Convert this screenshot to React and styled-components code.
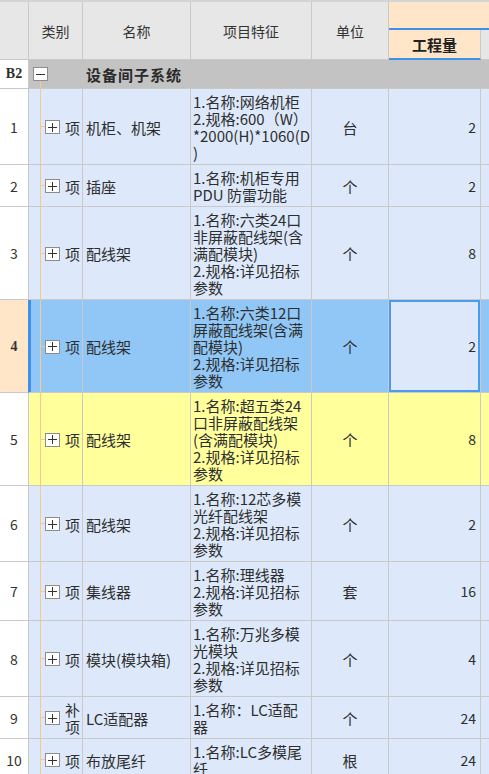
import React from "react";
import styled, { createGlobalStyle, css } from "styled-components";

const colors = {
  line: "#c9c9c9",
  header: "#e7e7e7",
  group: "#c3c3c3",
  row: "#dde9fb",
  selected: "#90c7f6",
  marked: "#ffff9c",
  peach: "#ffe6c8",
  blue: "#3f90ea",
  tree: "#f7c98f",
  text: "#2e2e2e",
};

const COLS = "29px 54px 108px 121px 77px 92px 1fr";

const GlobalStyle = createGlobalStyle`
  html, body {
    margin: 0;
    padding: 0;
    background: #ffffff;
  }
  body {
    font-family: "Noto Sans CJK SC", "Liberation Sans", sans-serif;
    color: ${colors.text};
  }
`;

const Sheet = styled.div`
  width: 489px;
  height: 774px;
  overflow: hidden;
`;

const Header = styled.div`
  display: grid;
  grid-template-columns: ${COLS};
  grid-template-rows: 28px 30px;
  border-top: 2px solid #d4d4d4;
  background: ${colors.header};
`;

const HeadCell = styled.div`
  grid-row: span 2;
  display: flex;
  align-items: center;
  justify-content: center;
  border-right: 1px solid ${colors.line};
  border-bottom: 1px solid ${colors.line};
  font-size: 14px;
  color: #333;
`;

const QtyBand = styled.div`
  grid-column: 6 / span 2;
  grid-row: 1;
  background: ${colors.peach};
  border-bottom: 2px solid ${colors.blue};
`;

const QtyHead = styled.div`
  grid-column: 6;
  grid-row: 2;
  display: flex;
  align-items: center;
  justify-content: center;
  background: ${colors.peach};
  border-right: 1px solid ${colors.line};
  border-bottom: 2px solid ${colors.blue};
  font-size: 15px;
  font-weight: 700;
  color: #222;
`;

const HeadFiller = styled.div`
  grid-column: 7;
  grid-row: 2;
  border-bottom: 1px solid ${colors.line};
`;

const GroupRow = styled.div`
  display: grid;
  grid-template-columns: 29px 1fr;
  height: 29px;
`;

const GroupIndex = styled.div`
  display: flex;
  align-items: center;
  justify-content: center;
  background: #fff;
  border-right: 1px solid ${colors.line};
  border-bottom: 1px solid ${colors.line};
  font-family: "Liberation Serif", "Noto Sans CJK SC", serif;
  font-size: 14px;
  font-weight: 700;
`;

const GroupBody = styled.div`
  display: flex;
  align-items: center;
  background: ${colors.group};
  border-bottom: 1px solid ${colors.line};
`;

const GroupTree = styled.div`
  width: 54px;
  height: 100%;
  display: flex;
  align-items: center;
  padding-left: 4px;
  box-sizing: border-box;
  background: linear-gradient(${colors.tree}, ${colors.tree}) no-repeat 11px
    100% / 1px 7px;
`;

const GroupTitle = styled.div`
  padding-left: 3px;
  font-size: 15px;
  font-weight: 700;
  letter-spacing: 1px;
  color: #2a2a2a;
`;

const Toggle = styled.span`
  flex: none;
  width: 15px;
  height: 14px;
  box-sizing: border-box;
  border: 1px solid #8c8c8c;
  background: linear-gradient(#333, #333) center / 9px 1px no-repeat,
    ${(p) =>
      p.$open
        ? ""
        : css`linear-gradient(#333, #333) center / 1px 9px no-repeat,`}
    #fff;
`;

const rowBg = (state) =>
  state === "selected"
    ? colors.selected
    : state === "marked"
    ? colors.marked
    : colors.row;

const Row = styled.div`
  display: grid;
  grid-template-columns: ${COLS};
  background: ${(p) => rowBg(p.$state)};
  font-size: 15px;
  line-height: 17px;
`;

const Cell = styled.div`
  border-right: 1px solid ${colors.line};
  border-bottom: 1px solid ${colors.line};
  padding: 4px 2px 3px;
  display: flex;
  align-items: center;
  overflow: hidden;
`;

const IndexCell = styled(Cell)`
  justify-content: center;
  font-size: 14px;
  color: #333;
  background: ${(p) => (p.$selected ? colors.peach : "#fff")};
  ${(p) =>
    p.$selected &&
    css`
      border-right-color: ${colors.blue};
      font-weight: 700;
      font-family: "Liberation Serif", "Noto Sans CJK SC", serif;
    `}
`;

const KindCell = styled(Cell)`
  padding-left: 16px;
  background: linear-gradient(${colors.tree}, ${colors.tree}) no-repeat 11px 0 /
      1px 100%,
    linear-gradient(${colors.tree}, ${colors.tree}) no-repeat 11px 50% / 5px 1px;
  ${(p) =>
    p.$selected &&
    css`
      box-shadow: inset 2px 0 0 ${colors.blue};
    `}
`;

const KindText = styled.span`
  width: 15px;
  margin-left: 5px;
  text-align: center;
`;

const NameCell = styled(Cell)`
  padding-left: 3px;
  white-space: nowrap;
`;

const SpecCell = styled(Cell)`
  display: block;
  white-space: nowrap;
`;

const SpecLine = styled.div``;

const UnitCell = styled(Cell)`
  justify-content: center;
`;

const QtyCell = styled(Cell)`
  justify-content: flex-end;
  padding-right: 4px;
  font-size: 14px;
  ${(p) =>
    p.$selected &&
    css`
      background: ${colors.row};
      box-shadow: inset 0 0 0 2px #4a9cf3;
    `}
`;

const FillCell = styled.div`
  border-bottom: 1px solid ${colors.line};
`;

const items = [
  {
    no: 1,
    name: "机柜、机架",
    spec: ["1.名称:网络机柜", "2.规格:600（W）", "*2000(H)*1060(D", ")"],
    unit: "台",
    qty: 2,
  },
  { no: 2, name: "插座", spec: ["1.名称:机柜专用", "PDU 防雷功能"], unit: "个", qty: 2 },
  {
    no: 3,
    name: "配线架",
    spec: ["1.名称:六类24口", "非屏蔽配线架(含", "满配模块)", "2.规格:详见招标", "参数"],
    unit: "个",
    qty: 8,
  },
  {
    no: 4,
    name: "配线架",
    spec: ["1.名称:六类12口", "屏蔽配线架(含满", "配模块)", "2.规格:详见招标", "参数"],
    unit: "个",
    qty: 2,
    state: "selected",
  },
  {
    no: 5,
    name: "配线架",
    spec: ["1.名称:超五类24", "口非屏蔽配线架", "(含满配模块)", "2.规格:详见招标", "参数"],
    unit: "个",
    qty: 8,
    state: "marked",
  },
  {
    no: 6,
    name: "配线架",
    spec: ["1.名称:12芯多模", "光纤配线架", "2.规格:详见招标", "参数"],
    unit: "个",
    qty: 2,
  },
  {
    no: 7,
    name: "集线器",
    spec: ["1.名称:理线器", "2.规格:详见招标", "参数"],
    unit: "套",
    qty: 16,
  },
  {
    no: 8,
    name: "模块(模块箱)",
    spec: ["1.名称:万兆多模", "光模块", "2.规格:详见招标", "参数"],
    unit: "个",
    qty: 4,
  },
  { no: 9, kind: "补项", name: "LC适配器", spec: ["1.名称：LC适配", "器"], unit: "个", qty: 24 },
  { no: 10, name: "布放尾纤", spec: ["1.名称:LC多模尾", "纤"], unit: "根", qty: 24 },
];

const ItemRow = ({ item }) => {
  const selected = item.state === "selected";
  return (
    <Row $state={item.state}>
      <IndexCell $selected={selected}>{item.no}</IndexCell>
      <KindCell $selected={selected}>
        <Toggle />
        <KindText>{item.kind || "项"}</KindText>
      </KindCell>
      <NameCell>{item.name}</NameCell>
      <SpecCell>
        {item.spec.map((line, i) => (
          <SpecLine key={i}>{line}</SpecLine>
        ))}
      </SpecCell>
      <UnitCell>{item.unit}</UnitCell>
      <QtyCell $selected={selected}>{item.qty}</QtyCell>
      <FillCell />
    </Row>
  );
};

export default function App() {
  return (
    <Sheet>
      <GlobalStyle />
      <Header>
        <HeadCell />
        <HeadCell>类别</HeadCell>
        <HeadCell>名称</HeadCell>
        <HeadCell>项目特征</HeadCell>
        <HeadCell>单位</HeadCell>
        <QtyBand />
        <QtyHead>工程量</QtyHead>
        <HeadFiller />
      </Header>
      <GroupRow>
        <GroupIndex>B2</GroupIndex>
        <GroupBody>
          <GroupTree>
            <Toggle $open />
          </GroupTree>
          <GroupTitle>设备间子系统</GroupTitle>
        </GroupBody>
      </GroupRow>
      {items.map((item) => (
        <ItemRow key={item.no} item={item} />
      ))}
    </Sheet>
  );
}
